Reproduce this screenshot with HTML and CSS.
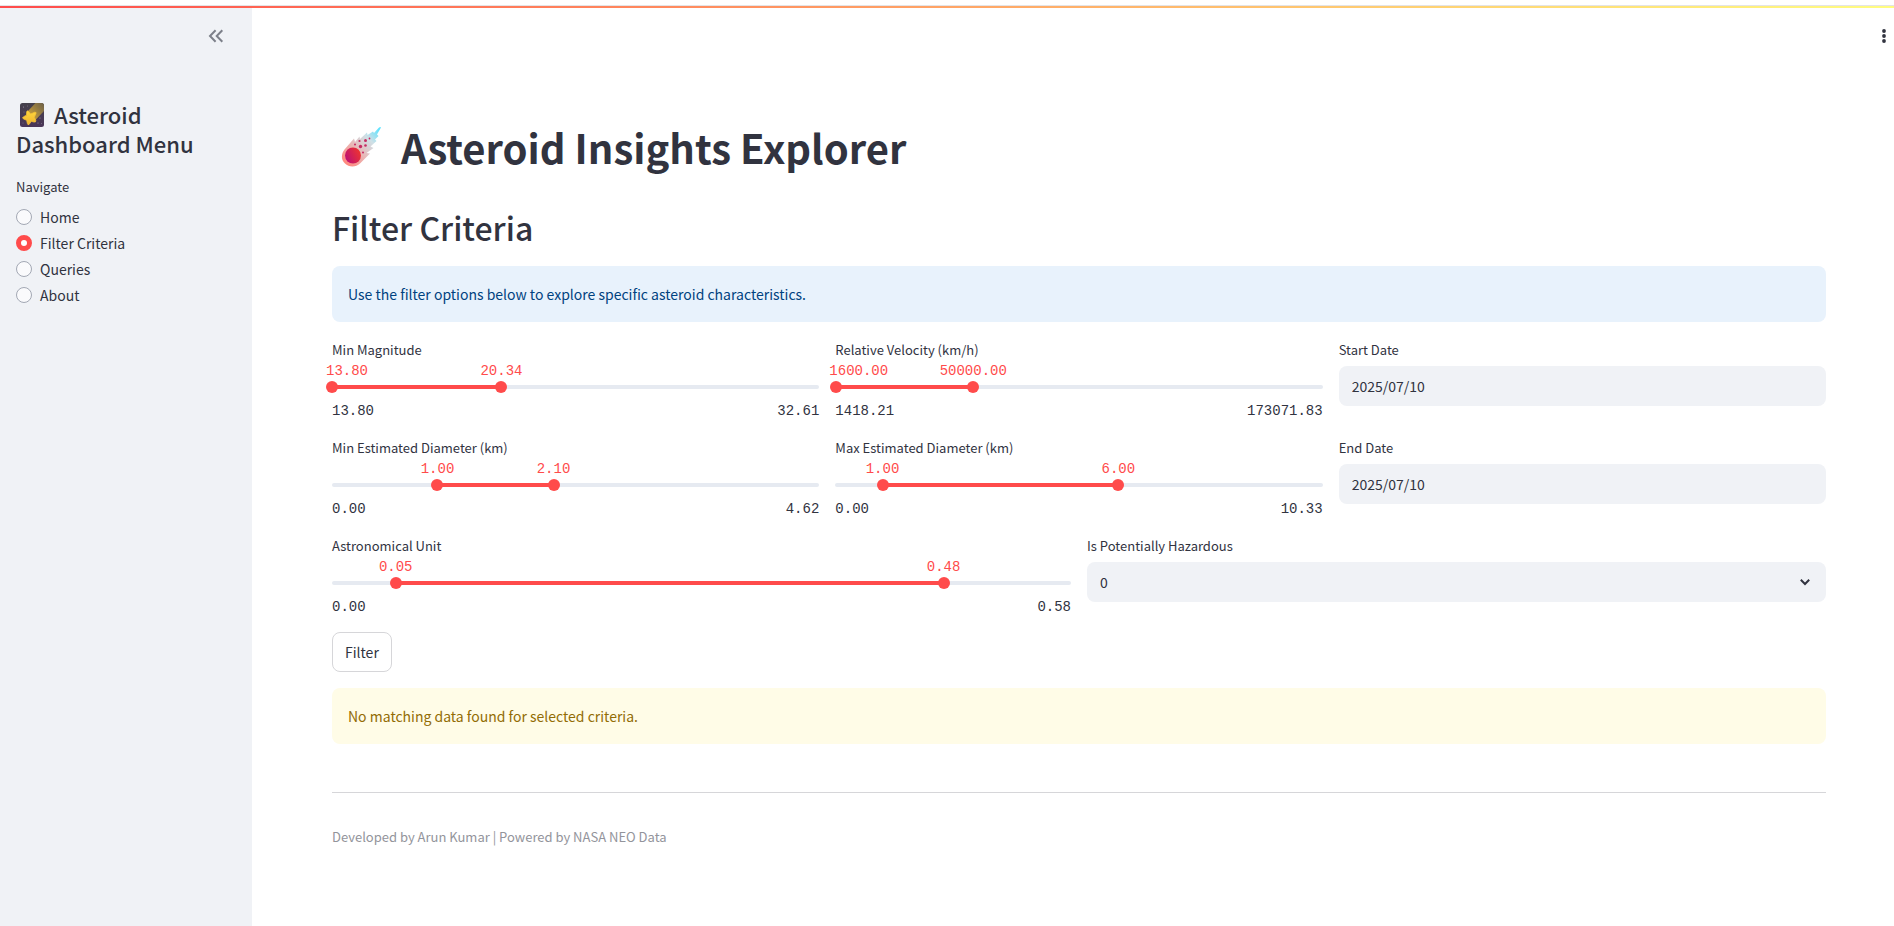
FILE: index.html
```html
<!DOCTYPE html>
<html lang="en">
<head>
<meta charset="utf-8">
<title>Asteroid Insights Explorer</title>
<meta name="viewport" content="width=device-width, initial-scale=1">
<link rel="stylesheet" href="styles.css">
</head>
<body>
<div class="decoration"></div>
<div class="app">
  <aside class="sidebar">
    <div class="sidebar-header">
      <button class="icon-button" type="button" aria-label="Collapse sidebar">
        <svg class="collapse-icon" viewBox="0 0 16 16"><path d="M7.6 2.2 2 8l5.600 5.800M14.300 2.200 8.700 8l5.600 5.800"/></svg>
      </button>
    </div>
    <h2 class="sidebar-title"><svg class="star-emoji" viewBox="0 0 24 24" aria-hidden="true">
      <defs>
        <linearGradient id="sky" x1="0" y1="0" x2="0" y2="1"><stop offset="0" stop-color="#45414c"/><stop offset="1" stop-color="#4a3558"/></linearGradient>
        <linearGradient id="trail" x1="1" y1="0" x2="0.1" y2="0.9"><stop offset="0" stop-color="#6b5f48"/><stop offset="1" stop-color="#d2a63a"/></linearGradient>
        <linearGradient id="star" x1="0" y1="0" x2="0" y2="1"><stop offset="0" stop-color="#ffd83d"/><stop offset="1" stop-color="#eeb02d"/></linearGradient>
      </defs>
      <rect width="24" height="24" rx="2.500" fill="url(#sky)"/>
      <path d="M7.500 8.500 15.500 0H21.500Q24 0 24 2.500V8L14.500 18Z" fill="url(#trail)"/>
      <path d="M8.200 8.200 10.600 11 14.800 9.200Q16.800 9 15.800 11L14.200 14.300 15.800 17.600Q16 19.500 14 19L11.200 18.300 9.200 21.300Q7.900 22.500 7.400 20.500L6.700 17.300 3.300 15.800Q1.800 14.600 3.600 13.700L6.500 12.200 6.700 8.900Q7.200 7.200 8.200 8.200Z" fill="url(#star)" stroke="#f6c335" stroke-width=".8"/>
      <g fill="#a99bb0"><circle cx="3.500" cy="4" r=".5"/><circle cx="7.500" cy="3" r=".4"/><circle cx="4" cy="9" r=".4"/><circle cx="20" cy="15" r=".5"/><circle cx="18" cy="20" r=".5"/><circle cx="21.500" cy="20.500" r=".4"/><circle cx="3" cy="20" r=".4"/></g>
    </svg>Asteroid Dashboard Menu</h2>
    <fieldset class="nav">
      <legend class="label">Navigate</legend>
      <label class="nav-item"><input class="radio" type="radio" name="page"><span>Home</span></label>
      <label class="nav-item"><input class="radio" type="radio" name="page" checked><span>Filter Criteria</span></label>
      <label class="nav-item"><input class="radio" type="radio" name="page"><span>Queries</span></label>
      <label class="nav-item"><input class="radio" type="radio" name="page"><span>About</span></label>
    </fieldset>
  </aside>

  <main class="main">
    <div class="toolbar">
      <button class="icon-button menu-button" type="button" aria-label="Main menu">
        <svg class="menu-icon" viewBox="0 0 12 16"><circle cx="6" cy="3" r="1.900"/><circle cx="6" cy="8" r="1.900"/><circle cx="6" cy="13" r="1.900"/></svg>
      </button>
    </div>
    <div class="content">
      <h1 class="page-title"><svg class="comet-emoji" viewBox="0 0 60 52" aria-hidden="true">
        <defs>
          <linearGradient id="tail" x1="0.1" y1="0.9" x2="0.95" y2="0.05"><stop offset="0" stop-color="#ff8a80"/><stop offset=".4" stop-color="#e6bcbc"/><stop offset=".7" stop-color="#cfe0e6"/><stop offset="1" stop-color="#5fe3ff"/></linearGradient>
          <linearGradient id="rock" x1="0" y1="0.7" x2="1" y2="0.2"><stop offset="0" stop-color="#bd0f74"/><stop offset="1" stop-color="#f0372c"/></linearGradient>
        </defs>
        <path d="M49 4.500Q48.300 3.500 46.800 4.800L42 10 41 8.500 35.500 12 35 9.500 28 16 27.500 13.500 23 19 22 15.500 12.500 26.500C9 31 9 37 13 40.500 17 44.500 24 44.300 28 40.500L38 30.500 34.500 30 41.500 25 38.500 23.500 44.500 18 43 16.500 46.500 13 45 11.500Z" fill="url(#tail)"/>
        <circle cx="21" cy="32.500" r="8" fill="url(#rock)"/>
        <g fill="#c62b63"><circle cx="23" cy="21.500" r="1"/><circle cx="27.500" cy="18" r="1.100"/><circle cx="28.500" cy="23.500" r="1.700"/><circle cx="33.500" cy="17.500" r="1.500"/><circle cx="33.500" cy="22.500" r="1.300"/><circle cx="37.500" cy="15.500" r=".9"/><circle cx="31" cy="29.500" r="1"/></g>
      </svg>Asteroid Insights Explorer</h1>
      <h2 class="section-title">Filter Criteria</h2>
      <div class="alert info">Use the filter options below to explore specific asteroid characteristics.</div>

      <div class="row">
        <div class="field" role="group" aria-labelledby="l-mag">
          <div class="label" id="l-mag">Min Magnitude</div>
          <div class="slider">
            <div class="values"><output class="value at-start">13.80</output><output class="value" style="left:34.77%">20.34</output></div>
            <div class="track"><div class="fill" style="left:0%;right:65.23%"></div>
              <input class="range" type="range" aria-label="Min Magnitude, from" min="13.8" max="32.61" step="any" value="13.8">
              <input class="range" type="range" aria-label="Min Magnitude, to" min="13.8" max="32.61" step="any" value="20.34"></div>
            <div class="ticks"><span>13.80</span><span>32.61</span></div>
          </div>
        </div>
        <div class="field" role="group" aria-labelledby="l-vel">
          <div class="label" id="l-vel">Relative Velocity (km/h)</div>
          <div class="slider">
            <div class="values"><output class="value at-start">1600.00</output><output class="value" style="left:28.3%">50000.00</output></div>
            <div class="track"><div class="fill" style="left:0.11%;right:71.7%"></div>
              <input class="range" type="range" aria-label="Relative Velocity, from" min="1418.21" max="173071.83" step="any" value="1600">
              <input class="range" type="range" aria-label="Relative Velocity, to" min="1418.21" max="173071.83" step="any" value="50000"></div>
            <div class="ticks"><span>1418.21</span><span>173071.83</span></div>
          </div>
        </div>
        <div class="field">
          <label class="label" for="start">Start Date</label>
          <input class="control" id="start" type="text" value="2025/07/10">
        </div>
      </div>

      <div class="row">
        <div class="field" role="group" aria-labelledby="l-min">
          <div class="label" id="l-min">Min Estimated Diameter (km)</div>
          <div class="slider">
            <div class="values"><output class="value" style="left:21.65%">1.00</output><output class="value" style="left:45.45%">2.10</output></div>
            <div class="track"><div class="fill" style="left:21.65%;right:54.55%"></div>
              <input class="range" type="range" aria-label="Min Estimated Diameter, from" min="0" max="4.62" step="any" value="1">
              <input class="range" type="range" aria-label="Min Estimated Diameter, to" min="0" max="4.62" step="any" value="2.1"></div>
            <div class="ticks"><span>0.00</span><span>4.62</span></div>
          </div>
        </div>
        <div class="field" role="group" aria-labelledby="l-max">
          <div class="label" id="l-max">Max Estimated Diameter (km)</div>
          <div class="slider">
            <div class="values"><output class="value" style="left:9.68%">1.00</output><output class="value" style="left:58.08%">6.00</output></div>
            <div class="track"><div class="fill" style="left:9.68%;right:41.92%"></div>
              <input class="range" type="range" aria-label="Max Estimated Diameter, from" min="0" max="10.33" step="any" value="1">
              <input class="range" type="range" aria-label="Max Estimated Diameter, to" min="0" max="10.33" step="any" value="6"></div>
            <div class="ticks"><span>0.00</span><span>10.33</span></div>
          </div>
        </div>
        <div class="field">
          <label class="label" for="end">End Date</label>
          <input class="control" id="end" type="text" value="2025/07/10">
        </div>
      </div>

      <div class="row">
        <div class="field" role="group" aria-labelledby="l-au">
          <div class="label" id="l-au">Astronomical Unit</div>
          <div class="slider">
            <div class="values"><output class="value" style="left:8.62%">0.05</output><output class="value" style="left:82.76%">0.48</output></div>
            <div class="track"><div class="fill" style="left:8.62%;right:17.24%"></div>
              <input class="range" type="range" aria-label="Astronomical Unit, from" min="0" max="0.58" step="any" value="0.05">
              <input class="range" type="range" aria-label="Astronomical Unit, to" min="0" max="0.58" step="any" value="0.48"></div>
            <div class="ticks"><span>0.00</span><span>0.58</span></div>
          </div>
        </div>
        <div class="field">
          <label class="label" for="hazard">Is Potentially Hazardous</label>
          <div class="select-wrap">
            <select class="control" id="hazard"><option>0</option><option>1</option></select>
            <svg class="chevron" viewBox="0 0 12 12" aria-hidden="true"><path d="M1.800 3.800 6 8l4.200-4.200"/></svg>
          </div>
        </div>
      </div>

      <button class="filter-button" type="button">Filter</button>
      <div class="alert warning">No matching data found for selected criteria.</div>
      <hr class="divider">
      <footer class="caption">Developed by Arun Kumar | Powered by NASA NEO Data</footer>
    </div>
  </main>
</div>
</body>
</html>
```
FILE: styles.css
```css
* { box-sizing: border-box; }

body {
  margin: 0;
  min-height: 100vh;
  display: flex;
  flex-direction: column;
  background: #fff;
  color: #31333f;
  font-family: "Noto Sans CJK SC", "Noto Sans", sans-serif;
  font-size: 14px;
  line-height: 24px;
}

h1, h2 { margin: 0; }

button, input, select { font: inherit; color: inherit; }

.decoration {
  height: 8px;
  padding-top: 6px;
  background: linear-gradient(90deg, #ff4b4b, #fffd80) content-box, linear-gradient(#e4e4e6, #e4e4e6) 0 5px / 100% 1px no-repeat border-box #fff;
}

.app { flex: 1; display: flex; }

/* Sidebar */
.sidebar {
  flex: none;
  width: 252px;
  padding: 16px;
  background: #f0f2f6;
}

.sidebar-header {
  display: flex;
  justify-content: flex-end;
  padding-right: 12px;
  margin-bottom: 52px;
}

.icon-button {
  display: flex;
  align-items: center;
  justify-content: center;
  height: 24px;
  padding: 0;
  border: 0;
  background: none;
  cursor: pointer;
}

.collapse-icon {
  width: 16px;
  height: 16px;
  fill: none;
  stroke: #7d808a;
  stroke-width: 2;
}

.sidebar-title {
  margin-bottom: 17px;
  font-size: 22px;
  font-weight: 500;
  line-height: 29px;
}

.star-emoji {
  width: 24px;
  height: 24px;
  margin: 0 10px 0 4px;
  vertical-align: -3px;
}

.nav { margin: 0; padding: 0; border: 0; }

.label {
  display: block;
  padding: 0;
  margin-bottom: 4px;
  font-size: 13px;
  line-height: 24px;
}

.nav .label { margin-bottom: 6px; }

.nav-item {
  display: flex;
  align-items: center;
  gap: 8px;
  margin-bottom: 2px;
}

.radio {
  appearance: none;
  width: 16px;
  height: 16px;
  margin: 0;
  border: 1px solid #a3a8b4;
  border-radius: 50%;
  background: #fafafc;
}

.radio:checked { border: 5px solid #ff4b4b; background: #fff; }

/* Main */
.main { flex: 1; min-width: 0; }

.toolbar {
  display: flex;
  justify-content: flex-end;
  padding: 16px 4px;
}

.menu-icon { width: 12px; height: 16px; fill: #31333f; }

.content {
  display: flex;
  flex-direction: column;
  gap: 16px;
  padding: 59px 68px 64px 80px;
}

.page-title {
  display: flex;
  align-items: flex-start;
  gap: 9px;
  font-size: 40px;
  font-weight: 700;
  line-height: 48px;
}

.comet-emoji { width: 60px; height: 52px; }

.section-title {
  margin-top: 16px;
  padding-bottom: 2px;
  font-size: 32px;
  font-weight: 500;
  line-height: 41px;
}

.alert {
  padding: 16px;
  border-radius: 8px;
}

.info { background: #e8f2fc; color: #004280; }
.warning { background: #fffce7; color: #926c05; }

.row { display: flex; gap: 16px; }

.field { flex: 1; min-width: 0; }

.slider {
  display: flex;
  flex-direction: column;
  height: 54px;
  font-family: "Liberation Mono", monospace;
  line-height: 16px;
}

.values { position: relative; height: 13px; color: #ff4b4b; }

.value { position: absolute; bottom: 0; transform: translateX(-50%); }

.value.at-start { left: -6px; transform: none; }

.track {
  position: relative;
  display: grid;
  grid-template-rows: 4px;
  height: 4px;
  margin: 6px 0 14px;
  border-radius: 4px;
  background: #e6eaf1;
}

.fill { position: absolute; top: 0; bottom: 0; background: #ff4b4b; }

.range {
  appearance: none;
  position: relative;
  grid-area: 1 / 1;
  align-self: center;
  width: calc(100% + 12px);
  height: 12px;
  margin: 0 -6px;
  background: none;
  pointer-events: none;
}

.range::-webkit-slider-thumb {
  appearance: none;
  width: 12px;
  height: 12px;
  border-radius: 50%;
  background: #ff4b4b;
  pointer-events: auto;
}

.ticks { display: flex; justify-content: space-between; }

.control {
  display: block;
  width: 100%;
  height: 40px;
  padding: 0 13px;
  border: 0;
  border-radius: 8px;
  background: #f0f2f6;
}

select.control { appearance: none; }

.select-wrap { position: relative; }

.chevron {
  position: absolute;
  right: 15px;
  top: 14px;
  width: 12px;
  height: 12px;
  fill: none;
  stroke: #31333f;
  stroke-width: 2;
  pointer-events: none;
}

.filter-button {
  align-self: flex-start;
  height: 40px;
  padding: 0 12px;
  border: 1px solid #d6d6d9;
  border-radius: 8px;
  background: #fff;
}

.divider {
  width: 100%;
  margin: 32px 0 16px;
  border: 0;
  border-top: 1px solid #d6d6d9;
}

.caption { color: #93949b; font-size: 13px; }
```
